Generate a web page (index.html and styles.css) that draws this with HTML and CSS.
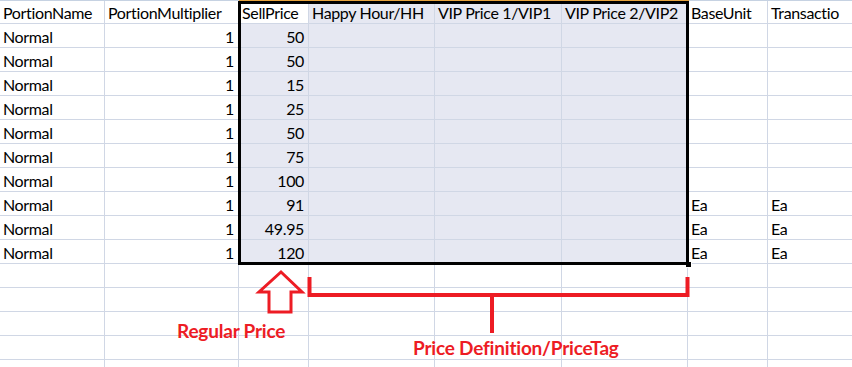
FILE: index.html
```html
<!DOCTYPE html>
<html>
<head>
<meta charset="utf-8">
<link rel="stylesheet" href="styles.css">
</head>
<body>
<div class="sheet">
  <div class="topline">
    <span class="tl tl-a"></span><span class="tl tl-sel"></span><span class="tl tl-b"></span>
  </div>
  <table class="grid">
    <colgroup>
      <col class="c1"><col class="c2"><col class="c3"><col class="c4"><col class="c5"><col class="c6"><col class="c7"><col class="c8">
    </colgroup>
    <tr class="hdr">
      <td>PortionName</td><td>PortionMultiplier</td><td class="active">SellPrice</td><td class="sel">Happy Hour/HH</td><td class="sel">VIP Price 1/VIP1</td><td class="sel">VIP Price 2/VIP2</td><td>BaseUnit</td><td>Transactio</td>
    </tr>
    <tr><td>Normal</td><td class="num">1</td><td class="sel num">50</td><td class="sel"></td><td class="sel"></td><td class="sel"></td><td></td><td></td></tr>
    <tr><td>Normal</td><td class="num">1</td><td class="sel num">50</td><td class="sel"></td><td class="sel"></td><td class="sel"></td><td></td><td></td></tr>
    <tr><td>Normal</td><td class="num">1</td><td class="sel num">15</td><td class="sel"></td><td class="sel"></td><td class="sel"></td><td></td><td></td></tr>
    <tr><td>Normal</td><td class="num">1</td><td class="sel num">25</td><td class="sel"></td><td class="sel"></td><td class="sel"></td><td></td><td></td></tr>
    <tr><td>Normal</td><td class="num">1</td><td class="sel num">50</td><td class="sel"></td><td class="sel"></td><td class="sel"></td><td></td><td></td></tr>
    <tr><td>Normal</td><td class="num">1</td><td class="sel num">75</td><td class="sel"></td><td class="sel"></td><td class="sel"></td><td></td><td></td></tr>
    <tr><td>Normal</td><td class="num">1</td><td class="sel num">100</td><td class="sel"></td><td class="sel"></td><td class="sel"></td><td></td><td></td></tr>
    <tr><td>Normal</td><td class="num">1</td><td class="sel num">91</td><td class="sel"></td><td class="sel"></td><td class="sel"></td><td>Ea</td><td>Ea</td></tr>
    <tr><td>Normal</td><td class="num">1</td><td class="sel num">49.95</td><td class="sel"></td><td class="sel"></td><td class="sel"></td><td>Ea</td><td>Ea</td></tr>
    <tr><td>Normal</td><td class="num">1</td><td class="sel num">120</td><td class="sel"></td><td class="sel"></td><td class="sel"></td><td>Ea</td><td>Ea</td></tr>
    <tr><td></td><td></td><td></td><td></td><td></td><td></td><td></td><td></td></tr>
    <tr><td></td><td></td><td></td><td></td><td></td><td></td><td></td><td></td></tr>
    <tr><td></td><td></td><td></td><td></td><td></td><td></td><td></td><td></td></tr>
    <tr><td></td><td></td><td></td><td></td><td></td><td></td><td></td><td></td></tr>
    <tr><td></td><td></td><td></td><td></td><td></td><td></td><td></td><td></td></tr>
  </table>

  <div class="selection"><span class="handle"></span></div>

  <svg class="annot" width="852" height="367" viewBox="0 0 852 367">
    <polygon points="281,272 302,292 291,292 291,312 269,312 269,292 259,292" fill="none" stroke="#ED1C24" stroke-width="3" stroke-linejoin="miter"/>
    <polyline points="309.5,277 309.5,295 687.5,295 687.5,277" fill="none" stroke="#ED1C24" stroke-width="4"/>
    <line x1="492" y1="295" x2="492" y2="333" stroke="#ED1C24" stroke-width="4"/>
  </svg>
  <div class="label label-reg">Regular Price</div>
  <div class="label label-def">Price Definition/PriceTag</div>
</div>
</body>
</html>
```
FILE: styles.css
```css
html, body {
  margin: 0;
  padding: 0;
  background: #ffffff;
  overflow: hidden;
}
.sheet {
  position: relative;
  width: 852px;
  height: 367px;
  overflow: hidden;
  font-family: Lato, "Open Sans", sans-serif;
  font-size: 16px;
  color: #000;
}
.topline {
  display: flex;
  height: 1px;
}
.tl { display: block; height: 1px; }
.tl-a { width: 239px; background: #C6D2E2; }
.tl-sel { width: 450px; background: #E6A33E; }
.tl-b { flex: 1; background: #C6D2E2; }
.grid {
  border-collapse: separate;
  border-spacing: 0;
  table-layout: fixed;
  width: 952px;
}
.c1 { width: 105px; }
.c2 { width: 134px; }
.c3 { width: 70px; }
.c4 { width: 126px; }
.c5 { width: 127px; }
.c6 { width: 126px; }
.c7 { width: 80px; }
.c8 { width: 184px; }
.grid td {
  height: 23px;
  padding: 0 3px;
  border-right: 1px solid #D0D7E5;
  border-bottom: 1px solid #D0D7E5;
  white-space: nowrap;
  overflow: hidden;
  vertical-align: bottom;
  line-height: 20px;
  letter-spacing: -0.35px;
}
.grid .hdr td { height: 22px; }
.grid td.num { text-align: right; padding-right: 4px; }
.grid td.sel { background: #E6E8F2; }
.grid td.active { background: #ffffff; }
.selection {
  position: absolute;
  left: 238px;
  top: 1px;
  width: 445px;
  height: 258px;
  border: 3px solid #000;
}
.handle {
  position: absolute;
  right: -6px;
  bottom: -6px;
  width: 5px;
  height: 5px;
  background: #000;
  border: 1px solid #fff;
  border-top: none;
  border-left: none;
}
.annot {
  position: absolute;
  left: 0;
  top: 0;
}
.label {
  position: absolute;
  color: #ED1C24;
  font-weight: bold;
  font-family: Lato, "Open Sans", sans-serif;
  font-size: 19px;
  line-height: 22px;
  white-space: nowrap;
  letter-spacing: -0.2px;
}
.label-reg { left: 177px; top: 320px; }
.label-def { left: 413px; top: 337px; }
```
